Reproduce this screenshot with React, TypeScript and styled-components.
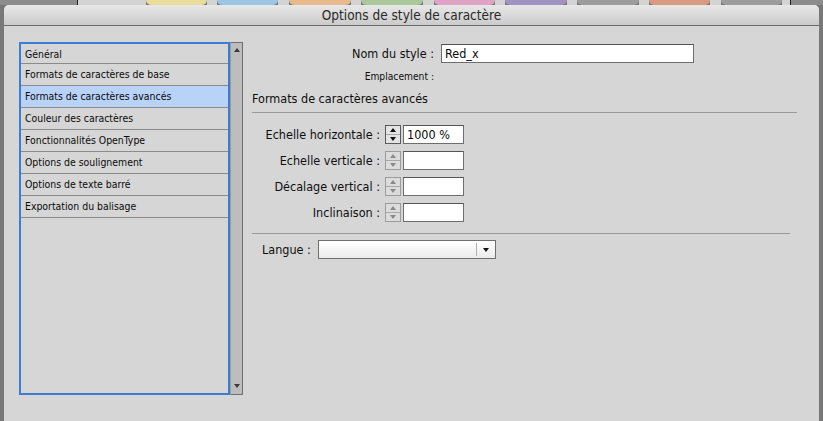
import styled, { createGlobalStyle } from 'styled-components'

const GlobalStyle = createGlobalStyle`
  html, body {
    margin: 0;
    padding: 0;
  }
  body {
    font-family: "DejaVu Sans Condensed", "DejaVu Sans", sans-serif;
    font-stretch: condensed;
    background: #7a7a7a;
    color: #0e0e0e;
  }
`;

const Page = styled.div`
  width: 823px;
  height: 421px;
  overflow: hidden;
  display: flex;
  flex-direction: column;
  background: #787878;
`;

const Strip = styled.div`
  height: 5px;
  display: flex;
  flex-shrink: 0;
`;

const Segment = styled.div<{ $w?: number; $c: string; $round?: boolean }>`
  width: ${p => (p.$w ? `${p.$w}px` : 'auto')};
  flex: ${p => (p.$w ? '0 0 auto' : '1')};
  background: ${p => p.$c};
  border-radius: ${p => (p.$round ? '0 0 6px 6px' : '0')};
`;

const Window = styled.div`
  flex: 1;
  margin: 0 4px;
  background: #d6d6d6;
  border-radius: 5px 5px 0 0;
  overflow: hidden;
  display: flex;
  flex-direction: column;
`;

const TitleBar = styled.div`
  height: 20px;
  line-height: 20px;
  border-bottom: 1px solid #6a6a6a;
  background: linear-gradient(#e8e8e8, #cbcbcb);
  text-align: center;
  font-size: 13.5px;
  color: #2a2a2a;
`;

const Body = styled.div`
  display: flex;
  gap: 9px;
  padding: 16px 22px 0 15px;
`;

const ListBox = styled.div`
  width: 224px;
  height: 353px;
  display: flex;
  flex-shrink: 0;
`;

const ListArea = styled.div`
  width: 211px;
  box-sizing: border-box;
  border: 2px solid #3b7cd4;
  background: #d6d6d6;
`;

const Row = styled.div<{ $selected?: boolean }>`
  height: 21px;
  line-height: 21px;
  border-bottom: 1px solid #8a8a8a;
  padding-left: 4px;
  font-size: 10.4px;
  color: #0a0a0a;
  background: ${p => (p.$selected ? '#b8d2f8' : 'transparent')};
  white-space: nowrap;

  &:first-child {
    height: 19px;
    line-height: 20px;
  }
`;

const ScrollBar = styled.div`
  width: 13px;
  box-sizing: border-box;
  border: 1px solid #6e6e6e;
  border-left: 1px solid #9a9a9a;
  background: #bdbdbd;
  display: flex;
  flex-direction: column;
  justify-content: space-between;
  align-items: center;
  padding: 5px 0 6px;
`;

const Arrow = styled.div<{ $dir: 'up' | 'down'; $size?: number; $color?: string }>`
  width: 0;
  height: 0;
  border-left: ${p => p.$size ?? 3}px solid transparent;
  border-right: ${p => p.$size ?? 3}px solid transparent;
  ${p =>
    p.$dir === 'up'
      ? `border-bottom: ${(p.$size ?? 3) + 1}px solid ${p.$color ?? '#333'};`
      : `border-top: ${(p.$size ?? 3) + 1}px solid ${p.$color ?? '#333'};`}
`;

const RightPanel = styled.div`
  flex: 1;
  display: flex;
  flex-direction: column;
  font-size: 12.5px;
`;

const NameRow = styled.div`
  display: flex;
  align-items: center;
  gap: 7px;
  height: 22px;
`;

const NameLabel = styled.div`
  width: 182px;
  text-align: right;
  white-space: nowrap;
`;

const TextBox = styled.input<{ $w: number }>`
  width: ${p => p.$w}px;
  height: 19px;
  box-sizing: border-box;
  border: 1px solid #6e6e6e;
  border-top-color: #555;
  background: #fff;
  padding: 0 3px;
  margin: 0;
  font-family: "DejaVu Sans Condensed", "DejaVu Sans", sans-serif;
  font-stretch: condensed;
  font-size: 12.5px;
  color: #0a0a0a;
  outline: none;
`;

const PlaceRow = styled.div`
  margin-top: 6px;
  width: 182px;
  height: 14px;
  line-height: 14px;
  text-align: right;
  font-size: 10.2px;
  white-space: nowrap;
`;

const SectionTitle = styled.div`
  margin-top: 7px;
  height: 15px;
  line-height: 15px;
  white-space: nowrap;
`;

const Rule = styled.div<{ $w: number; $top: number }>`
  width: ${p => p.$w}px;
  height: 1px;
  margin-top: ${p => p.$top}px;
  background: #9a9a9a;
`;

const Fields = styled.div`
  margin-top: 12px;
  display: flex;
  flex-direction: column;
  gap: 7px;
`;

const FieldRow = styled.div`
  display: flex;
  align-items: center;
  height: 19px;
`;

const FieldLabel = styled.div`
  width: 128px;
  margin-right: 5px;
  text-align: right;
  white-space: nowrap;
`;

const Spinner = styled.div<{ $off?: boolean }>`
  width: 16px;
  height: 19px;
  box-sizing: border-box;
  border: 1px solid ${p => (p.$off ? '#9c9c9c' : '#5a5a5a')};
  margin-right: 2px;
  display: flex;
  flex-direction: column;
  background: ${p => (p.$off ? '#dcdcdc' : '#e4e4e4')};
`;

const SpinHalf = styled.div<{ $off?: boolean }>`
  flex: 1;
  display: flex;
  align-items: center;
  justify-content: center;

  & + & {
    border-top: 1px solid ${p => (p.$off ? '#a8a8a8' : '#6a6a6a')};
  }
`;

const LangRow = styled.div`
  margin-top: 6px;
  padding-left: 10px;
  display: flex;
  align-items: center;
  gap: 7px;
  height: 19px;
`;

const Select = styled.div`
  width: 178px;
  height: 19px;
  box-sizing: border-box;
  border: 1px solid #6e6e6e;
  background: linear-gradient(#ffffff, #ececec);
  display: flex;
  justify-content: flex-end;
`;

const SelectButton = styled.div`
  width: 18px;
  margin: 2px 0;
  border-left: 1px solid #b0b0b0;
  display: flex;
  align-items: center;
  justify-content: center;
`;

const strip = [
  { w: 77, c: '#8c8c8c' },
  { w: 1, c: '#1e1e1e' },
  { w: 68, c: '#d4d4d4' },
  { w: 61, c: '#e8dd9a', r: true },
  { w: 10, c: '#d4d4d4' },
  { w: 61, c: '#9cc6e6', r: true },
  { w: 11, c: '#d4d4d4' },
  { w: 62, c: '#e8b98a', r: true },
  { w: 10, c: '#d4d4d4' },
  { w: 62, c: '#abc89a', r: true },
  { w: 11, c: '#d4d4d4' },
  { w: 61, c: '#dfa3c6', r: true },
  { w: 10, c: '#d4d4d4' },
  { w: 62, c: '#9e93c1', r: true },
  { w: 10, c: '#d4d4d4' },
  { w: 62, c: '#9c9c9c', r: true },
  { w: 10, c: '#d4d4d4' },
  { w: 61, c: '#d99a80', r: true },
  { w: 11, c: '#d4d4d4' },
  { w: 61, c: '#9c9c9c', r: true },
  { w: 8, c: '#d4d4d4' },
  { w: 1, c: '#1e1e1e' },
  { c: '#8c8c8c' },
];

const sections = [
  'Général',
  'Formats de caractères de base',
  'Formats de caractères avancés',
  'Couleur des caractères',
  'Fonctionnalités OpenType',
  'Options de soulignement',
  'Options de texte barré',
  'Exportation du balisage',
];

const fields = [
  { label: 'Echelle horizontale :', value: '1000 %', enabled: true },
  { label: 'Echelle verticale :', value: '', enabled: false },
  { label: 'Décalage vertical :', value: '', enabled: false },
  { label: 'Inclinaison :', value: '', enabled: false },
];

const App = () => {
  return (
    <Page>
      <GlobalStyle />
      <Strip>
        {strip.map((s, i) => (
          <Segment key={i} $w={s.w} $c={s.c} $round={s.r} />
        ))}
      </Strip>
      <Window>
        <TitleBar>Options de style de caractère</TitleBar>
        <Body>
          <ListBox>
            <ListArea>
              {sections.map((name, i) => (
                <Row key={name} $selected={i === 2}>{name}</Row>
              ))}
            </ListArea>
            <ScrollBar>
              <Arrow $dir="up" $size={3} $color="#3a3a3a" />
              <Arrow $dir="down" $size={3} $color="#3a3a3a" />
            </ScrollBar>
          </ListBox>

          <RightPanel>
            <NameRow>
              <NameLabel>Nom du style :</NameLabel>
              <TextBox $w={253} defaultValue="Red_x" readOnly />
            </NameRow>
            <PlaceRow>Emplacement :</PlaceRow>
            <SectionTitle>Formats de caractères avancés</SectionTitle>
            <Rule $w={545} $top={6} />

            <Fields>
              {fields.map(f => (
                <FieldRow key={f.label}>
                  <FieldLabel>{f.label}</FieldLabel>
                  <Spinner $off={!f.enabled}>
                    <SpinHalf $off={!f.enabled}>
                      <Arrow $dir="up" $size={3} $color={f.enabled ? '#111' : '#8a8a8a'} />
                    </SpinHalf>
                    <SpinHalf $off={!f.enabled}>
                      <Arrow $dir="down" $size={3} $color={f.enabled ? '#111' : '#8a8a8a'} />
                    </SpinHalf>
                  </Spinner>
                  <TextBox $w={61} defaultValue={f.value} readOnly />
                </FieldRow>
              ))}
            </Fields>

            <Rule $w={538} $top={11} />

            <LangRow>
              <span>Langue :</span>
              <Select>
                <SelectButton>
                  <Arrow $dir="down" $size={3} $color="#111" />
                </SelectButton>
              </Select>
            </LangRow>
          </RightPanel>
        </Body>
      </Window>
    </Page>
  );
};

export default App;
